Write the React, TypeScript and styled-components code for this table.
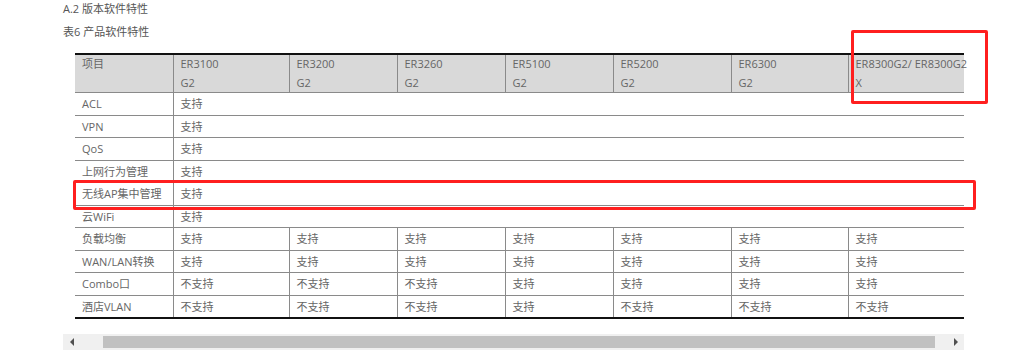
import React from "react";
import styled, { createGlobalStyle } from "styled-components";

const GlobalStyle = createGlobalStyle`
   body {
      margin: 0;
      background: #fff;
      font-family: "Open Sans", "Noto Sans CJK SC", sans-serif;
   }
`;

const Page = styled.div`
   position: relative;
   width: 1022px;
   height: 351px;
   padding-left: 63px;
   box-sizing: border-box;
   overflow: hidden;
`;

const Heading = styled.div<{ $gap?: number }>`
   font-size: 11px;
   line-height: 18px;
   color: #555;
   margin-top: ${(p) => p.$gap ?? 0}px;
`;

const Frame = styled.div`
   width: 901px;
   margin-top: 12px;
`;

const Table = styled.table`
   margin-left: 12px;
   width: 889px;
   border-collapse: collapse;
   table-layout: fixed;
   font-size: 11px;
   color: #666;
   border-top: 2px solid #111;
   border-bottom: 2px solid #111;
`;

const HeadCell = styled.th`
   background: #d9d9d9;
   font-weight: normal;
   text-align: left;
   vertical-align: top;
   padding: 0 0 0 7px;
   line-height: 18.5px;
   white-space: nowrap;
   border-left: 1px solid #8a8a8a;
   border-bottom: 1px solid #8a8a8a;
   &:first-child {
      border-left: none;
   }
`;

const Row = styled.tr`
   height: 22.5px;
`;

const Cell = styled.td`
   padding: 0 0 0 7px;
   line-height: 19px;
   white-space: nowrap;
   vertical-align: middle;
   border-left: 1px solid #8a8a8a;
   border-bottom: 1px solid #8a8a8a;
   &:first-child {
      border-left: none;
   }
`;

const Scrollbar = styled.div`
   display: flex;
   align-items: center;
   height: 16px;
   margin-top: 15px;
   background: #f0f0f0;
`;

const Arrow = styled.div<{ $dir: "left" | "right" }>`
   width: 17px;
   height: 16px;
   display: flex;
   align-items: center;
   justify-content: center;
   &::before {
      content: "";
      border-top: 4px solid transparent;
      border-bottom: 4px solid transparent;
      ${(p) =>
         p.$dir === "left"
            ? "border-right: 4px solid #505050;"
            : "border-left: 4px solid #505050;"}
   }
`;

const Track = styled.div`
   flex: 1;
   height: 12px;
   padding-left: 23px;
   padding-right: 12px;
   display: flex;
`;

const Thumb = styled.div`
   flex: 1;
   background: #c1c1c1;
`;

const Mark = styled.div`
   position: absolute;
   border: 3px solid #ff1f1f;
   border-radius: 2px;
   box-sizing: border-box;
`;

const models = [
   ["ER3100", "G2"],
   ["ER3200", "G2"],
   ["ER3260", "G2"],
   ["ER5100", "G2"],
   ["ER5200", "G2"],
   ["ER6300", "G2"],
   ["ER8300G2/ ER8300G2", "X"],
];

const widths = [98, 116, 108, 108, 108, 118, 117, 116];

const shared = ["ACL", "VPN", "QoS", "上网行为管理", "无线AP集中管理", "云WiFi"];

const S = "支持";
const N = "不支持";

const detail: [string, string[]][] = [
   ["负载均衡", [S, S, S, S, S, S, S]],
   ["WAN/LAN转换", [S, S, S, S, S, S, S]],
   ["Combo口", [N, N, N, S, S, S, S]],
   ["酒店VLAN", [N, N, N, S, N, N, N]],
];

export default function App() {
   return (
      <Page>
         <GlobalStyle />
         <Heading>A.2 版本软件特性</Heading>
         <Heading $gap={5}>表6 产品软件特性</Heading>
         <Frame>
            <Table>
               <colgroup>
                  {widths.map((w, i) => (
                     <col key={i} style={{ width: w }} />
                  ))}
               </colgroup>
               <thead>
                  <tr>
                     <HeadCell>项目</HeadCell>
                     {models.map(([a, b]) => (
                        <HeadCell key={a}>
                           {a}
                           <br />
                           {b}
                        </HeadCell>
                     ))}
                  </tr>
               </thead>
               <tbody>
                  {shared.map((name) => (
                     <Row key={name}>
                        <Cell>{name}</Cell>
                        <Cell colSpan={7}>{S}</Cell>
                     </Row>
                  ))}
                  {detail.map(([name, vals]) => (
                     <Row key={name}>
                        <Cell>{name}</Cell>
                        {vals.map((v, i) => (
                           <Cell key={i}>{v}</Cell>
                        ))}
                     </Row>
                  ))}
               </tbody>
            </Table>
            <Scrollbar>
               <Arrow $dir="left" />
               <Track>
                  <Thumb />
               </Track>
               <Arrow $dir="right" />
            </Scrollbar>
         </Frame>
         <Mark style={{ left: 851, top: 30, width: 137, height: 74 }} />
         <Mark style={{ left: 73, top: 180, width: 903, height: 30 }} />
      </Page>
   );
}
